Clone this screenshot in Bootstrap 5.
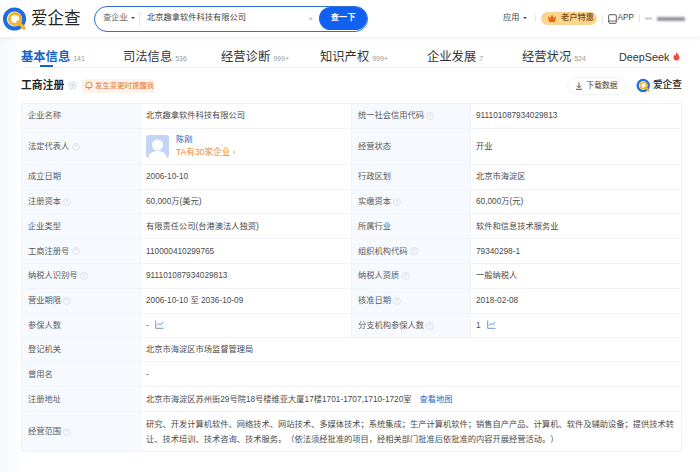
<!DOCTYPE html>
<html lang="zh">
<head>
<meta charset="utf-8">
<link href="https://cdn.jsdelivr.net/npm/bootstrap@5.3.0/dist/css/bootstrap.min.css" rel="stylesheet">
<style>
html,body{height:472px;overflow:hidden}
body{font-family:"Liberation Sans","Noto Sans CJK SC",sans-serif;font-size:8.25px;color:#444;background:linear-gradient(90deg,#f4f7fd 0,#fff 21px);text-spacing-trim:space-all}
.topbar{height:37px;background:#fff;box-shadow:0 1px 4px rgba(30,50,90,.09);padding:0 15px 0 2px}
.brand{width:92px;gap:3px}
.brand-text{font-size:16.5px;color:#222;line-height:1}
.searchbox{width:274px;height:26px;border:1.5px solid #2f6fd8;border-radius:13px;padding:0 0 0 8px}
.search-kind{width:36px;color:#666}
.caret{display:inline-block;border:2.2px solid transparent;border-top:2.6px solid #444;border-bottom:0;margin-left:3px;vertical-align:middle}
.caret-wide{margin-left:4px}
.search-sep{width:1px;height:14px;background:#e4e6ea;margin-right:7px}
.search-x{color:#aaa;font-size:8px;margin-right:6px}
.search-btn{width:48px;height:23px;border-radius:12px;background:#1160f0;border:0;color:#fff;font-size:8.25px;padding:0;font-weight:700}
.top-right{color:#444}
.vip{width:56px;height:13px;border-radius:7px;background:#fbd58d;color:#7b4a10;font-weight:500;gap:4px;padding-left:2px}
.tick{width:1px;height:7px;background:#e4e6ea}
.tick-a{margin:0 5px 0 8px}
.tick-b{margin:0 5px}
.tick-c{margin:0 5px 0 5px}
.blur-a{width:7px;height:3px;background:#d5d8dc;filter:blur(.6px);margin-right:5px}
.blur-b{width:28px;height:4px;background:#93969b;filter:blur(.8px)}
.tabs{height:31px;margin:0 19px 0 21px;border-bottom:1px solid #f1f3f6;font-size:12.3px;color:#333}
.tabs>div{height:30px;padding-top:11px;line-height:18px;position:relative;white-space:nowrap}
.tab-w1{width:102px}.tab-w2{width:98px}.tab-w3{width:99px}.tab-w4{width:107px}.tab-w5{width:95px}.tab-w6{width:97px}
.tab-deep{font-size:10.8px}
.tabs small{font-size:7px;color:#999;margin-left:3px}
.tab-on{color:#1662c4;font-weight:700}
.tab-on::after{content:"";position:absolute;left:19px;bottom:0;width:13px;height:2px;background:#1662c4}
.head-row{height:35px;margin:0 18px 0 21px}
.head-title{font-size:10.8px;font-weight:700;color:#222}
.help{flex:none}
.remind{height:14px;width:72px;border-radius:3px;background:#fdf3ea;color:#e8742c;font-size:7.4px;gap:2px;padding-left:3px;margin-left:5px;white-space:nowrap}
.dl-btn{width:59px;height:18px;border:1px solid #f0f2f5;border-radius:9px;font-size:7.8px;color:#444;gap:3px;background:#fff}
.mini-text{font-size:9.7px;color:#222;font-weight:500}
.mini-logo{gap:2px;margin-left:10px}
.info-wrap{margin:0 19px 0 21px}
.info-table{table-layout:fixed;width:660px;margin:0;--bs-table-border-color:#f1f3f7;border-color:#f1f3f7;color:#444;font-size:8.25px;line-height:15px}
.info-table td{padding:0 5px;vertical-align:middle;height:24.8px;color:#4a4a4a;border-color:#f1f3f7}
.info-table td.lbl{background:#f6f9fd;color:#5a5a5a;padding-left:6px}
.info-table .person-row td{height:36px}
.info-table .tight-row td{height:24px}
.info-table .scope-row td{height:40px;padding-top:1px}
.person-row .ava{width:23px;height:23px;border-radius:3px;background:#c3d5f5;overflow:hidden;flex:none}
.person-box{gap:7px}
.person-name{color:#2e67c6;line-height:12px}
.person-more{color:#ec8a3a;line-height:12px;font-size:8.6px}
.map-link{color:#2e67c6;text-decoration:none;margin-left:8px}
.trend{margin-left:6px;vertical-align:-1px}
</style>
</head>
<body>
<header class="topbar d-flex align-items-center">
  <div class="brand d-flex align-items-center">
    <svg width="26" height="26" viewBox="0 0 26 26"><circle cx="12.5" cy="13" r="9.6" fill="none" stroke="#1d6fe0" stroke-width="4"/><circle cx="13" cy="13" r="5.6" fill="none" stroke="#f7b32b" stroke-width="3"/><path d="M16 16l6 6" stroke="#f7b32b" stroke-width="3.4" stroke-linecap="round"/></svg>
    <span class="brand-text">爱企查</span>
  </div>
  <div class="searchbox d-flex align-items-center">
    <span class="search-kind text-nowrap">查企业<i class="caret"></i></span>
    <span class="search-sep"></span>
    <span class="flex-grow-1">北京趣拿软件科技有限公司</span>
    <span class="search-x">×</span>
    <button class="search-btn" type="button">查一下</button>
  </div>
  <div class="top-right ms-auto d-flex align-items-center">
    <span>应用<i class="caret caret-wide"></i></span>
    <span class="tick tick-a"></span>
    <span class="vip d-flex align-items-center justify-content-center">
      <svg width="10" height="9" viewBox="0 0 10 9"><path d="M1 2l2.2 2L5 .6 6.8 4 9 2 8 8H2z" fill="#e26a12"/></svg>老户特惠</span>
    <span class="tick tick-b"></span>
    <svg width="9" height="10" viewBox="0 0 9 10"><rect x=".7" y=".7" width="7.6" height="8.6" rx="1" fill="none" stroke="#444" stroke-width=".9"/><path d="M1 7h7" stroke="#444" stroke-width=".8"/></svg>
    <span>APP</span>
    <span class="tick tick-c"></span>
    <span class="blur-a"></span><span class="blur-b"></span>
  </div>
</header>

<nav class="tabs d-flex">
  <div class="tab-on tab-w1">基本信息<small class="fw-normal">141</small></div>
  <div class="tab-w2">司法信息<small>536</small></div>
  <div class="tab-w3">经营诊断<small>999+</small></div>
  <div class="tab-w4">知识产权<small>999+</small></div>
  <div class="tab-w5">企业发展<small>7</small></div>
  <div class="tab-w6">经营状况<small>524</small></div>
  <div class="tab-deep">DeepSeek<svg class="ms-1 align-top mt-1" width="7" height="9" viewBox="0 0 7 9"><path d="M3.5 0c.4 1.6 3 2.8 3 5.4A3 3 0 0 1 .5 5.4C.5 4 1.3 3.300 1.800 2.600c.2.7.5 1 .9 1.100C3 2.600 3.200 1.200 3.500 0z" fill="#ee4a3d"/></svg></div>
</nav>

<section class="head-row d-flex align-items-center">
  <span class="head-title">工商注册</span>
  <svg class="help ms-1" width="9" height="9" viewBox="0 0 9 9"><circle cx="4.500" cy="4.500" r="4" fill="#f3f4f6" stroke="#d8dadf" stroke-width=".8"/><text x="4.500" y="6.700" font-size="6" text-anchor="middle" fill="#bbb">?</text></svg>
  <span class="remind d-flex align-items-center">
    <svg width="8" height="9" viewBox="0 0 8 9"><path d="M1 6.500V4a3 3 0 0 1 6 0v2.500zM3 8h2" fill="none" stroke="#e8742c" stroke-width=".9"/></svg>发生变更时提醒我</span>
  <span class="dl-btn ms-auto d-flex align-items-center justify-content-center">
    <svg width="8" height="8" viewBox="0 0 8 8"><path d="M4 .5v5M2 3.700L4 5.700l2-2M1 7.300h6" fill="none" stroke="#444" stroke-width=".9"/></svg>下载数据</span>
  <span class="mini-logo d-flex align-items-center">
    <svg width="15" height="15" viewBox="0 0 26 26"><circle cx="12.500" cy="13" r="9.600" fill="none" stroke="#1d6fe0" stroke-width="4"/><circle cx="13" cy="13" r="5.600" fill="none" stroke="#f7b32b" stroke-width="3"/><path d="M16 16l6 6" stroke="#f7b32b" stroke-width="3.400" stroke-linecap="round"/></svg>
    <span class="mini-text">爱企查</span>
  </span>
</section>

<main class="info-wrap">
<table class="table table-bordered info-table">
  <colgroup><col style="width:119px"><col style="width:211px"><col style="width:119px"><col style="width:211px"></colgroup>
  <tbody>
  <tr><td class="lbl">企业名称</td><td>北京趣拿软件科技有限公司</td><td class="lbl">统一社会信用代码 <svg class="help" width="8" height="8" viewBox="0 0 8 8"><use href="#q"/></svg></td><td>911101087934029813</td></tr>
  <tr class="person-row"><td class="lbl">法定代表人 <svg class="help" width="8" height="8" viewBox="0 0 8 8"><use href="#q"/></svg></td><td>
    <div class="d-flex align-items-center person-box">
      <div class="ava"><svg width="23" height="23" viewBox="0 0 23 23"><circle cx="11.500" cy="10" r="5.500" fill="#fff"/><ellipse cx="11.500" cy="22" rx="9" ry="6" fill="#fff"/></svg></div>
      <div><div class="person-name">陈刚</div><div class="person-more">TA有30家企业 ›</div></div>
    </div></td><td class="lbl">经营状态</td><td>开业</td></tr>
  <tr><td class="lbl">成立日期</td><td>2006-10-10</td><td class="lbl">行政区划</td><td>北京市海淀区</td></tr>
  <tr><td class="lbl">注册资本 <svg class="help" width="8" height="8" viewBox="0 0 8 8"><use href="#q"/></svg></td><td>60,000万(美元)</td><td class="lbl">实缴资本 <svg class="help" width="8" height="8" viewBox="0 0 8 8"><use href="#q"/></svg></td><td>60,000万(元)</td></tr>
  <tr><td class="lbl">企业类型</td><td>有限责任公司(台港澳法人独资)</td><td class="lbl">所属行业</td><td>软件和信息技术服务业</td></tr>
  <tr><td class="lbl">工商注册号 <svg class="help" width="8" height="8" viewBox="0 0 8 8"><use href="#q"/></svg></td><td>110000410299765</td><td class="lbl">组织机构代码 <svg class="help" width="8" height="8" viewBox="0 0 8 8"><use href="#q"/></svg></td><td>79340298-1</td></tr>
  <tr><td class="lbl">纳税人识别号 <svg class="help" width="8" height="8" viewBox="0 0 8 8"><use href="#q"/></svg></td><td>911101087934029813</td><td class="lbl">纳税人资质 <svg class="help" width="8" height="8" viewBox="0 0 8 8"><use href="#q"/></svg></td><td>一般纳税人</td></tr>
  <tr><td class="lbl">营业期限 <svg class="help" width="8" height="8" viewBox="0 0 8 8"><use href="#q"/></svg></td><td>2006-10-10 至 2036-10-09</td><td class="lbl">核准日期 <svg class="help" width="8" height="8" viewBox="0 0 8 8"><use href="#q"/></svg></td><td>2018-02-08</td></tr>
  <tr><td class="lbl">参保人数</td><td>-<svg class="trend" width="9" height="9" viewBox="0 0 9 9"><use href="#t"/></svg></td><td class="lbl">分支机构参保人数 <svg class="help" width="8" height="8" viewBox="0 0 8 8"><use href="#q"/></svg></td><td>1<svg class="trend" width="9" height="9" viewBox="0 0 9 9"><use href="#t"/></svg></td></tr>
  <tr class="tight-row"><td class="lbl">登记机关</td><td colspan="3">北京市海淀区市场监督管理局</td></tr>
  <tr><td class="lbl">曾用名</td><td colspan="3">-</td></tr>
  <tr><td class="lbl">注册地址</td><td colspan="3">北京市海淀区苏州街29号院18号楼维亚大厦17楼1701-1707,1710-1720室<a class="map-link" href="#">查看地图</a></td></tr>
  <tr class="scope-row"><td class="lbl">经营范围 <svg class="help" width="8" height="8" viewBox="0 0 8 8"><use href="#q"/></svg></td><td colspan="3">研究、开发计算机软件、网络技术、网站技术、多媒体技术；系统集成；生产计算机软件；销售自产产品、计算机、软件及辅助设备；提供技术转让、技术培训、技术咨询、技术服务。（依法须经批准的项目，经相关部门批准后依批准的内容开展经营活动。）</td></tr>
  </tbody>
</table>
</main>
<svg width="0" height="0" class="d-block">
  <defs>
    <g id="q"><circle cx="4" cy="4" r="3.500" fill="none" stroke="#d5d9e0" stroke-width=".7"/><path d="M3 3.100a1 1 0 1 1 1.500.9c-.4.2-.5.4-.5.800M4 5.800v.4" fill="none" stroke="#cfd3da" stroke-width=".6"/></g>
    <g id="t"><path d="M.7.500v7.800h7.800" fill="none" stroke="#5b8ad8" stroke-width=".9"/><path d="M2 5.500L4 3.500l1.500 1.500L8 2" fill="none" stroke="#5b8ad8" stroke-width=".9"/></g>
  </defs>
</svg>
<script src="https://cdn.jsdelivr.net/npm/bootstrap@5.3.0/dist/js/bootstrap.bundle.min.js"></script>
</body>
</html>
